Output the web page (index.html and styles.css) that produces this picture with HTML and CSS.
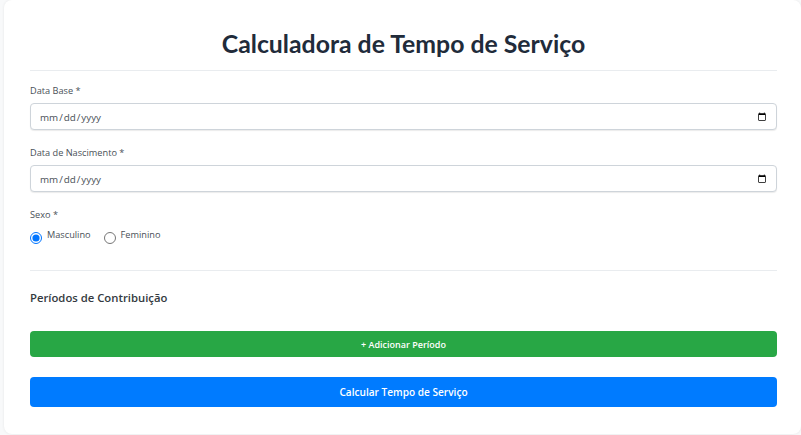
FILE: index.html
```html
<!DOCTYPE html>
<html lang="pt-BR">
<head>
  <meta charset="UTF-8" />
  <meta name="viewport" content="width=device-width, initial-scale=1.0"/>
  <title>Calculadora de Tempo de Serviço</title>
  <link rel="stylesheet" href="styles.css">
</head>
<body>
  <div class="container">
    <h1>Calculadora de Tempo de Serviço</h1>

    <div class="form-group">
      <label for="dataBase">Data Base *</label>
      <input type="date" id="dataBase" />
    </div>

    <div class="form-group">
      <label for="dataNascimento">Data de Nascimento *</label>
      <input type="date" id="dataNascimento" />
    </div>

    <div class="form-group sexo-group">
      <label>Sexo *</label>
      <div class="radio-group">
        <label class="radio-label"><input type="radio" name="sexo" checked /><span>Masculino</span></label>
        <label class="radio-label"><input type="radio" name="sexo" /><span>Feminino</span></label>
      </div>
    </div>

    <div class="periodos">
      <h3>Períodos de Contribuição</h3>
      <button class="btn btn-add">+ Adicionar Período</button>
    </div>

    <button class="btn btn-calc">Calcular Tempo de Serviço</button>
  </div>
</body>
</html>
```

FILE: styles.css
```css
:root {
  --text-dark: #212b3a;
  --text-label: #495057;
  --line: #e9ecef;
  --accent-green: #28a745;
  --accent-blue: #007bff;
  --font-family: 'Open Sans', 'Noto Sans', sans-serif;
}

html {
  overflow: hidden;
}

body {
  margin: 0;
  padding: 0 0 1px 4px;
  font-family: var(--font-family);
  background-color: #f8f9fa;
  color: var(--text-dark);
}

.container {
  background-color: #fff;
  border-radius: 8px;
  box-shadow: 0 0 3px rgba(0, 0, 0, 0.08);
  padding: 27px 0 26px 26px;
  height: 381px;
}

h1 {
  width: 747px;
  margin: 0 0 13px;
  padding-bottom: 9px;
  border-bottom: 1px solid var(--line);
  font-family: 'Lato', var(--font-family);
  font-size: 24.8px;
  font-weight: 700;
  line-height: 34px;
  text-align: center;
}

.form-group {
  width: 747px;
  margin-bottom: 16px;
}

.form-group > label {
  display: block;
  margin-bottom: 6px;
  font-size: 9.2px;
  line-height: 13px;
  font-weight: 500;
  color: var(--text-label);
}

input[type="date"] {
  display: block;
  box-sizing: border-box;
  width: 100%;
  height: 27px;
  padding: 1px 7px 0 8px;
  font-family: var(--font-family);
  font-size: 9.8px;
  color: var(--text-label);
  background-color: #fff;
  border: 1px solid #ced4da;
  border-radius: 4px;
  box-shadow: 0 1px 1px rgba(0, 0, 0, 0.08);
}

.radio-group {
  display: flex;
  gap: 13px;
}

.radio-label {
  display: flex;
  align-items: flex-start;
  font-size: 9.2px;
  line-height: 13px;
  color: var(--text-label);
}

.radio-label input {
  width: 12px;
  height: 12px;
  margin: 3px 5px 0 0;
}

.radio-label span {
  margin-top: -1px;
}

.sexo-group > label {
  margin-bottom: 8px;
}

.sexo-group {
  padding-bottom: 26px;
  margin-bottom: 0;
  border-bottom: 1px solid var(--line);
}

.periodos {
  width: 747px;
}

h3 {
  margin: 19px 0 25px;
  font-size: 11.3px;
  line-height: 16px;
  font-weight: 600;
  color: #343a40;
}

.btn {
  display: block;
  width: 747px;
  border: none;
  border-radius: 4px;
  color: #fff;
  font-family: var(--font-family);
  font-weight: 600;
  cursor: pointer;
}

.btn-add {
  height: 26px;
  margin-bottom: 20px;
  font-size: 9px;
  background-color: var(--accent-green);
}

.btn-calc {
  height: 30px;
  font-size: 10.1px;
  background-color: var(--accent-blue);
}
```
